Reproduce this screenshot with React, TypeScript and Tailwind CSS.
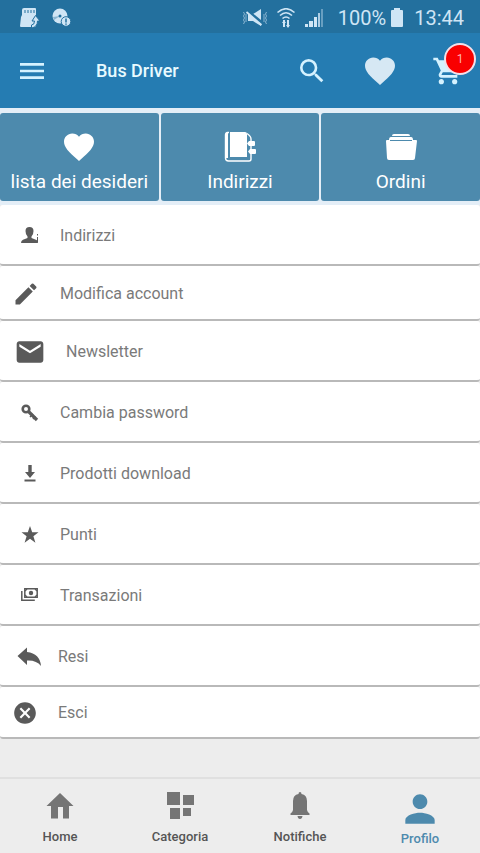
import React from "react";
import {
  MdCancel,
  MdEmail,
  MdFavorite,
  MdMenu,
  MdModeEdit,
  MdPerson,
  MdSearch,
  MdShoppingCart,
} from "react-icons/md";

const SdCardIcon = () => (
  <svg viewBox="0 0 20 20" className="w-5 h-5" fill="currentColor">
    <path d="M4 0h11q1 0 1 1v17q0 1-1 1H1q-1 0-1-1l1-9 1-2V2q0-2 2-2z" />
    <path d="M5 2v3M8 2v3M11 2v3M14 2v3" stroke="#23709e" strokeWidth="1" />
    <path
      d="M15.500 7.500l4.500 5.500h-2.500q0 6-6 7v-3q3 0 3-4H12z"
      stroke="#23709e"
      strokeWidth="1"
    />
  </svg>
);

const DiscIcon = () => (
  <svg viewBox="0 0 20 20" className="w-5 h-5" fill="currentColor">
    <circle cx="8" cy="8" r="7.500" />
    <path d="M8 8L1 9l1 3z" fill="#23709e" opacity=".4" />
    <circle cx="8" cy="8" r="1.500" fill="#23709e" />
    <circle cx="14" cy="13.500" r="4.800" stroke="#23709e" strokeWidth="1" />
    <path d="M14 10.500v4M14 15.500v1.200" stroke="#23709e" strokeWidth="1.500" />
  </svg>
);

const MuteIcon = () => (
  <svg viewBox="0 0 26 20" className="w-[26px] h-5" fill="currentColor">
    <path d="M6 6h5l8-5v17l-8-5H6z" />
    <path d="M5 2.500l17 14" stroke="#23709e" strokeWidth="3" />
    <path d="M4.500 4l15 13" stroke="currentColor" strokeWidth="1.800" />
    <path
      d="M1.500 4l1 2-1 2 1 2-1 2 1 2-1 2M4 6v8M22 6v8M24.500 4l-1 2 1 2-1 2 1 2-1 2 1 2"
      fill="none"
      stroke="currentColor"
      opacity=".6"
    />
  </svg>
);

const WifiIcon = () => (
  <svg viewBox="0 0 20 20" className="w-5 h-5" fill="none">
    <path
      d="M1.500 4.500q8.500-7.500 17 0M4 7.500q6-5.500 12 0M6.500 10.500q3.500-3 7 0"
      stroke="currentColor"
      strokeWidth="1.600"
    />
    <path d="M8 12v7M12 12v7" stroke="currentColor" strokeWidth="2" />
    <path d="M6 15l2-3 2 3zM10 17l2 3 2-3z" fill="currentColor" />
  </svg>
);

const SignalIcon = () => (
  <svg viewBox="0 0 20 20" className="w-5 h-5" fill="currentColor">
    <path d="M1 16h3v3H1zM5 13h4v6H5zM10 9h3v10h-3z" />
    <path d="M14 5h2v14h-2z" opacity=".8" />
    <path d="M17 1h2v18h-2z" opacity=".4" />
  </svg>
);

const BatteryIcon = () => (
  <svg viewBox="0 0 14 20" className="w-[14px] h-5" fill="currentColor">
    <path d="M4 0h6v2h2q1 0 1 1v15q0 1-1 1H2q-1 0-1-1V3q0-1 1-1h2z" />
  </svg>
);

const AddressBookIcon = () => (
  <svg viewBox="0 0 32 32" className="w-8 h-8" fill="none">
    <path
      d="M5 1.500H3.500Q1.500 1.500 1.500 4v23q0 3 3 3H25q2 0 2-2V8q0-3-4-5.500"
      stroke="currentColor"
      strokeWidth="1.400"
    />
    <path d="M6 1h15q2 0 2 2v23H6z" fill="currentColor" />
    <path d="M3 2v25" stroke="currentColor" strokeWidth="2" />
    <path
      d="M25 10h5q1 0 1 1v3q0 1-1 1h-5l-2-2.500zM26 18h5q1 0 1 1v3q0 1-1 1h-5l-2-2.500z"
      fill="currentColor"
    />
  </svg>
);

const FolderIcon = () => (
  <svg viewBox="0 0 32 32" className="w-8 h-8" fill="currentColor">
    <path d="M9 3h14q2 0 2 2H7q0-2 2-2z" />
    <path d="M6 6h20q2 0 2 3h3q1 0 1 1l-2 17q0 2-2 2H4q-2 0-2-2L1 10q0-1 1-1h2q0-3 2-3z" />
    <path d="M5 9.500h22" stroke="#4d8aad" strokeWidth="1" />
  </svg>
);

const UserIcon = () => (
  <svg viewBox="0 0 20 20" className="w-5 h-5" fill="currentColor">
    <path d="M9.500 1Q13.500 1 13.500 5q0 3.500-2 5.500v1.500l5 2q1.500.7 1.500 3H1q0-2.500 2-3.200l4.500-1.800v-1.500Q5.500 8.500 5.500 5q0-4 4-4z" />
    <path d="M17.500 8v1.500M17.500 11v5" stroke="currentColor" strokeWidth="1" />
  </svg>
);

const KeyIcon = () => (
  <svg viewBox="0 0 20 20" className="w-5 h-5" fill="none">
    <circle cx="6" cy="6" r="3.300" stroke="currentColor" strokeWidth="2.600" />
    <path d="M8.500 8.500l8.500 8.500" stroke="currentColor" strokeWidth="3.200" />
    <path d="M10 14l3-3M13 16l2.500-2.500" stroke="currentColor" strokeWidth="1.500" />
  </svg>
);

const DownloadIcon = () => (
  <svg viewBox="0 0 20 20" className="w-5 h-5" fill="currentColor">
    <path d="M8.300 1h3.400v7H15l-5 6-5-6h3.300zM4.500 15.500h11V17.500h-11z" />
  </svg>
);

const StarIcon = () => (
  <svg viewBox="0 0 20 20" className="w-5 h-5" fill="currentColor">
    <path d="M10 1l2.200 6.300H18.500L13.400 11.200l2 6.500L10 13.800l-5.400 3.900 2-6.500L1.500 7.300h6.300z" />
  </svg>
);

const MoneyIcon = () => (
  <svg viewBox="0 0 20 20" className="w-5 h-5" fill="none" stroke="currentColor">
    <path d="M4.800 2.800h12.400v8.400H4.800z" strokeWidth="1.500" />
    <path d="M1.800 5v9.200h13" strokeWidth="1.500" />
    <circle cx="11" cy="7" r="2.200" fill="currentColor" stroke="none" />
    <path d="M5 5l2-2M15 3l2 2M5 9l2 2M15 11l2-2" strokeWidth="1.200" />
  </svg>
);

const ReplyIcon = () => (
  <svg viewBox="0 0 26 26" className="w-[26px] h-[26px]" fill="currentColor">
    <path d="M1.500 12L11 3.500v4.500q13 1.500 14 14-4.500-6-14-5.500v4.500z" />
  </svg>
);

const HomeIcon = () => (
  <svg viewBox="0 0 30 30" className="w-[30px] h-[30px]" fill="currentColor">
    <path d="M15 2l13.500 13H24v12.500h-6V16h-5v11.500H6V15H1.500z" />
  </svg>
);

const CategoryIcon = () => (
  <svg viewBox="0 0 30 30" className="w-[30px] h-[30px]" fill="currentColor">
    <path d="M2 1h13v13H2zM18 4h11v10H18zM5 17h10v11H5zM18 17h8v8h-8z" />
  </svg>
);

const BellIcon = () => (
  <svg viewBox="0 0 30 30" className="w-[30px] h-[30px]" fill="currentColor">
    <path d="M15 1q1.500 0 1.500 2 5.500 1 5.500 7v9q.5 2.500 2.500 3.500V24h-19v-1.500q2-1 2.500-3.500v-9q0-6 5.500-7 0-2 1.500-2zM12.500 25h5q-.4 3-2.500 3t-2.500-3z" />
  </svg>
);

const tiles = [
  { label: "lista dei desideri", icon: <MdFavorite size={36} /> },
  { label: "Indirizzi", icon: <AddressBookIcon /> },
  { label: "Ordini", icon: <FolderIcon /> },
];

const menu = [
  { label: "Indirizzi", icon: <UserIcon />, row: "h-[61px] pl-5 gap-5" },
  {
    label: "Modifica account",
    icon: <MdModeEdit size={28} />,
    row: "h-[55px] pl-3 gap-5",
  },
  { label: "Newsletter", icon: <MdEmail size={32} />, row: "h-[61px] pl-[14px] gap-5" },
  { label: "Cambia password", icon: <KeyIcon />, row: "h-[61px] pl-5 gap-5" },
  { label: "Prodotti download", icon: <DownloadIcon />, row: "h-[61px] pl-5 gap-5" },
  { label: "Punti", icon: <StarIcon />, row: "h-[61px] pl-5 gap-5" },
  { label: "Transazioni", icon: <MoneyIcon />, row: "h-[61px] pl-5 gap-5" },
  { label: "Resi", icon: <ReplyIcon />, row: "h-[61px] pl-4 gap-4" },
  { label: "Esci", icon: <MdCancel size={26} />, row: "h-[52px] pl-3 gap-5" },
];

const tabs = [
  { label: "Home", icon: <HomeIcon /> },
  { label: "Categoria", icon: <CategoryIcon /> },
  { label: "Notifiche", icon: <BellIcon /> },
];

const App: React.FC = () => {
  return (
    <div className="flex min-h-screen flex-col bg-[#ededed] font-[Roboto,sans-serif]">
      {/* Status bar */}
      <div className="flex h-[33px] items-center bg-[#23709e] pl-5 pr-4 pt-[2px] text-[#cfe5f5]">
        <div className="flex gap-3">
          <SdCardIcon />
          <DiscIcon />
        </div>
        <div className="ml-auto flex items-center">
          <MuteIcon />
          <span className="ml-2">
            <WifiIcon />
          </span>
          <span className="ml-2">
            <SignalIcon />
          </span>
          <span className="ml-3.5 text-xl leading-5">100%</span>
          <span className="ml-1">
            <BatteryIcon />
          </span>
          <span className="ml-2.5 text-xl leading-5">13:44</span>
        </div>
      </div>

      {/* Toolbar */}
      <header className="flex h-[75px] items-center bg-[#257cb2] px-4 pt-px text-[#d5f2ff]">
        <button aria-label="Menu">
          <MdMenu size={32} />
        </button>
        <h1 className="ml-12 text-lg font-medium text-[#e8faff]">Bus Driver</h1>
        <div className="ml-auto flex items-center gap-[34px]">
          <button aria-label="Cerca">
            <MdSearch size={32} />
          </button>
          <button aria-label="Preferiti" className="text-[#d6e8f4]">
            <MdFavorite size={36} />
          </button>
          <button aria-label="Carrello" className="relative">
            <MdShoppingCart size={32} />
            <span className="absolute -right-3 -top-3 flex h-8 w-8 items-center justify-center rounded-full border-2 border-[#f3dfe9] bg-[#f90000] text-xs text-[#ffb0b0]">
              1
            </span>
          </button>
        </div>
      </header>

      {/* Shortcuts */}
      <div className="grid grid-cols-3 gap-[2px] bg-[#e4eef7] pb-1 pt-[5px]">
        {tiles.map((tile) => (
          <button
            key={tile.label}
            className="flex h-[88px] flex-col items-center rounded-[3px] bg-[#4d8aad] pt-4 text-white"
          >
            <span className="flex h-9 items-center">{tile.icon}</span>
            <span className="mt-[5px] text-[19px] leading-6">{tile.label}</span>
          </button>
        ))}
      </div>

      {/* Account menu */}
      <main className="flex-1">
        <ul>
          {menu.map((item) => (
            <li key={item.label} className="bg-[#ededed]">
              <button
                className={
                  "flex w-full items-center rounded-[3px] border-b-2 border-[#b9b9b9] bg-white pt-[2px] text-[#5a5a5a] " +
                  item.row
                }
              >
                {item.icon}
                <span className="text-base text-[#7a7a7a]">{item.label}</span>
              </button>
            </li>
          ))}
        </ul>
      </main>

      {/* Bottom navigation */}
      <nav className="grid h-[76px] grid-cols-4 border-t-2 border-[#e0e0e0] bg-[#ededed] text-[13px] font-medium leading-4">
        {tabs.map((tab) => (
          <a
            key={tab.label}
            href="#"
            className="flex flex-col items-center pt-3 text-[#555]"
          >
            <span className="text-[#757575]">{tab.icon}</span>
            <span className="mt-2">{tab.label}</span>
          </a>
        ))}
        <a href="#" className="flex flex-col items-center pt-2 text-[#4d8aad]">
          <MdPerson size={44} />
          <span>Profilo</span>
        </a>
      </nav>
    </div>
  );
};

export default App;
